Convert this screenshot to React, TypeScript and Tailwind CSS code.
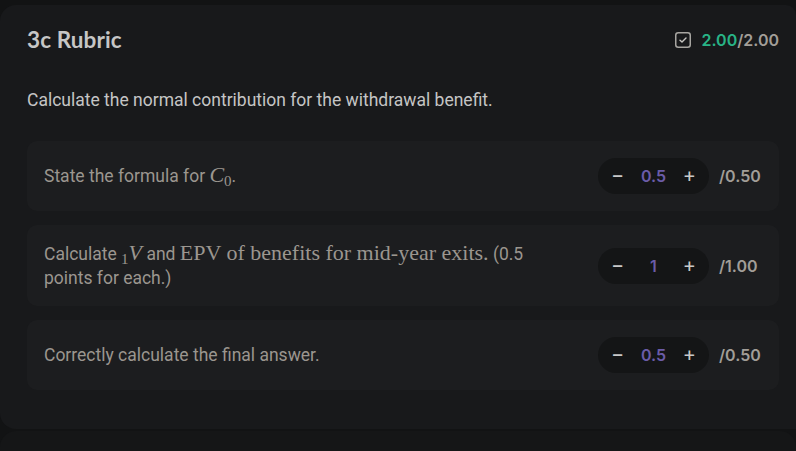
import React from "react";

const serif = { fontFamily: '"Liberation Serif", "DejaVu Serif", serif' };

function Stepper({ value, max }: { value: string; max: string }) {
  return (
    <div className="flex items-center gap-[10px] shrink-0">
      <div className="flex items-center h-[36px] w-[111px] rounded-full bg-[#141516] px-[13px] justify-between">
        <span className="text-[#c9c9c9] text-[20px] leading-none font-['Inter'] pb-[2px]">−</span>
        <span className="text-[#6b5ca8] text-[16px] font-semibold font-['Inter']">{value}</span>
        <span className="text-[#c9c9c9] text-[20px] leading-none font-['Inter'] pb-[2px]">+</span>
      </div>
      <span className="w-[42px] text-[#a29e98] text-[16px] font-semibold font-['Inter']">{max}</span>
    </div>
  );
}

function Item({ children, value, max, h }: { children: React.ReactNode; value: string; max: string; h: string }) {
  return (
    <div className={`flex items-center justify-between rounded-[10px] bg-[#1c1d1f] pl-[17px] pr-[18px] ${h}`}>
      <div className="text-[17.5px] leading-[23px] text-[#9b968f] max-w-[510px]">{children}</div>
      <Stepper value={value} max={max} />
    </div>
  );
}

export default function App() {
  return (
    <div className="w-[796px] h-[451px] bg-[#121314] overflow-hidden pt-[5px] font-['Roboto']">
      <div className="w-[796px] h-[424px] rounded-l-[16px] rounded-tr-[10px] bg-[#18191b] pl-[27px] pr-[17px] pt-[20px]">
        <div className="flex items-center justify-between h-[30px]">
          <h1 className="text-[22.5px] font-bold text-[#c6c6c6] font-['Lato'] tracking-[0.1px]">3c Rubric</h1>
          <div className="flex items-center gap-[10px]">
            <svg width="16" height="16" viewBox="0 0 16 16" fill="none">
              <rect x="0.75" y="0.75" width="14.5" height="14.5" rx="2.5" stroke="#a8a6a2" strokeWidth="1.5" />
              <path d="M5 8.2 L7 10 L11 6" stroke="#c8c6c2" strokeWidth="1.4" strokeLinecap="round" strokeLinejoin="round" />
            </svg>
            <span className="text-[16px] font-semibold font-['Inter']">
              <span className="text-[#28b487]">2.00</span>
              <span className="text-[#a29e98]">/2.00</span>
            </span>
          </div>
        </div>
        <p className="mt-[33px] text-[17.5px] leading-[25px] text-[#c5c5c5]">
          Calculate the normal contribution for the withdrawal benefit.
        </p>
        <div className="mt-[28px] flex flex-col gap-[14px]">
          <Item value="0.5" max="/0.50" h="h-[70px]">
            State the formula for{" "}
            <span style={serif} className="text-[22px]">
              <i>C</i>
              <span className="relative top-[4px] text-[15px]">0</span>
            </span>
            .
          </Item>
          <Item value="1" max="/1.00" h="h-[81px]">
            Calculate{" "}
            <span style={serif} className="text-[22px]">
              <span className="relative top-[4px] text-[15px]">1</span>
              <i>V</i>
            </span>{" "}
            and{" "}
            <span style={serif} className="text-[22px]">
              EPV of benefits for mid-year exits.
            </span>{" "}
            (0.5 points for each.)
          </Item>
          <Item value="0.5" max="/0.50" h="h-[70px]">
            Correctly calculate the final answer.
          </Item>
        </div>
      </div>
      <div className="mt-[2px] w-[796px] h-[40px] rounded-t-[16px] bg-[#151617]" />
    </div>
  );
}
